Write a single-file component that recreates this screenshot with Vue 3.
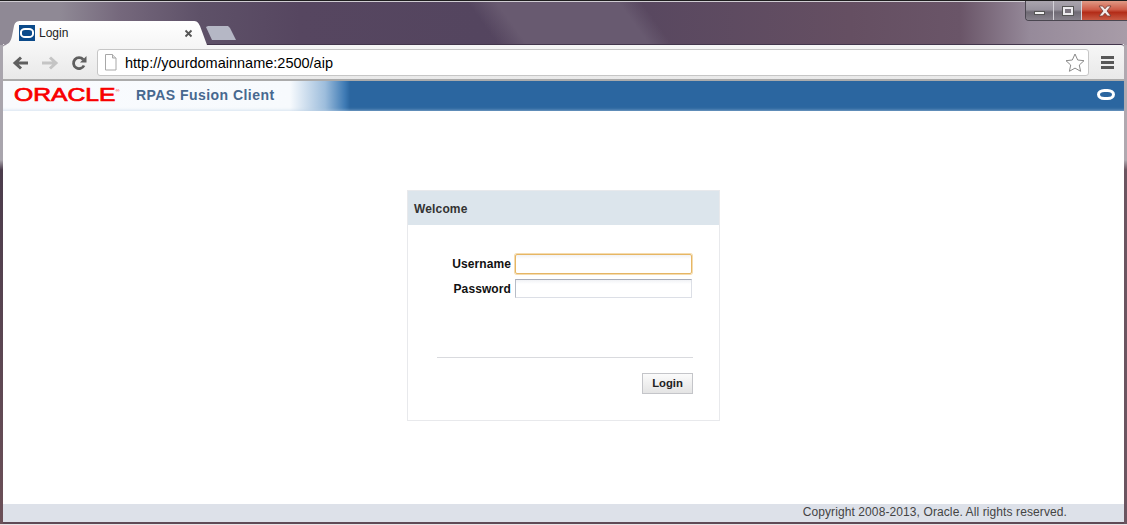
<script setup>
const fields = [
  { label: 'Username', cls: 'focus' },
  { label: 'Password', cls: '' }
]
</script>

<template>
  <div class="win">
    <div class="controls">
      <div class="ctl min"><i></i></div>
      <div class="ctl max"><i></i></div>
      <div class="ctl close">
        <svg width="14" height="12" viewBox="0 0 14 12"><path d="M1 1h3.600L7 3.800 9.400 1H13L9 6l4 5H9.400L7 8.200 4.600 11H1l4-5z" fill="#f4ecea" stroke="#6e3a34" stroke-width=".8"/></svg>
      </div>
    </div>
    <div class="tabstrip">
      <div class="tab">
        <span class="fav"><i></i></span>
        <span class="tabtitle">Login</span>
        <svg class="x" width="9" height="9" viewBox="0 0 9 9"><path d="M1.500 1.500l6 6M7.500 1.500l-6 6" stroke="#555" stroke-width="1.800"/></svg>
      </div>
      <div class="newtab"></div>
    </div>
    <div class="inner">
      <div class="toolbar">
        <svg class="nav" width="18" height="16" viewBox="0 0 18 16"><path d="M16 8H4M9 2.500 3 8l6 5.500" fill="none" stroke="#5f5f5f" stroke-width="3"/></svg>
        <svg class="nav fwd" width="18" height="16" viewBox="0 0 18 16"><path d="M1 8h12M9 2.500 15 8l-6 5.500" fill="none" stroke="#c4c4c4" stroke-width="3"/></svg>
        <svg class="nav reload" width="16" height="16" viewBox="0 0 16 16"><path d="M13 10.500A5.500 5.500 0 1 1 12.200 4.500" fill="none" stroke="#5f5f5f" stroke-width="2.800"/><path d="M15.500 1v6.500H9z" fill="#5f5f5f"/></svg>
        <div class="omni">
          <svg class="page" width="13" height="17" viewBox="0 0 13 17"><path d="M1.500.5h7l3.500 3.500v12h-10.500z" fill="#fff" stroke="#a8a8a8"/><path d="M8.500.5v3.500h3.500" fill="#e4e4e4" stroke="#a8a8a8"/></svg>
          <span class="url">http://yourdomainname:2500/aip</span>
          <svg class="star" width="20" height="19" viewBox="0 0 20 19"><path d="M10 1l2.700 6 6.300.7-4.700 4.300 1.300 6.300L10 15.100 4.400 18.300 5.700 12 1 7.700 7.300 7z" fill="#fff" stroke="#8a8a8a"/></svg>
        </div>
        <div class="menu"><i></i><i></i><i></i></div>
      </div>
      <header class="apphead">
        <div class="brand">
          <span class="oracle">ORACLE<sup>®</sup></span>
          <span class="product">RPAS Fusion Client</span>
        </div>
        <span class="ring"></span>
      </header>
      <main class="content">
        <section class="box">
          <h2 class="boxhead">Welcome</h2>
          <div class="boxbody">
            <div v-for="f in fields" :key="f.label" class="row">
              <label class="lbl">{{ f.label }}</label>
              <div class="field" :class="f.cls"></div>
            </div>
            <div class="actions">
              <button class="btn">Login</button>
            </div>
          </div>
        </section>
      </main>
      <footer class="foot">Copyright 2008-2013, Oracle. All rights reserved.</footer>
    </div>
  </div>
</template>

<style>
html, body { margin: 0; padding: 0; overflow: hidden; background: #fff; }
</style>

<style scoped>
.win {
  position: relative;
  width: 1127px;
  height: 525px;
  box-sizing: border-box;
  display: flex;
  flex-direction: column;
  padding: 1px 3px 3px 3px;
  overflow: hidden;
  font-family: "Liberation Sans", Arial, sans-serif;
  background-color: #5f4a56;
  background-image:
    linear-gradient(54deg, rgba(104,90,112,0) 43%, rgba(104,90,112,1) 45.500%, rgba(104,90,112,1) 56%, rgba(104,90,112,0) 58%),
    linear-gradient(90deg, #8f8995 0, #8f8995 60px, #75687c 120px, #5e5168 200px, #564660 300px, #54455f 480px, #594860 650px, #654f62 850px, #6a5568 960px, #968a9a 1030px, #a89ca8 1127px),
    linear-gradient(#a9a5ad 0, #a9a5ad 160px, #4b3c4c 170px, #6c5058 100%),
    linear-gradient(#b0a9b0 0, #b0a9b0 160px, #6b5560 170px, #6b5560 100%);
  background-size: 100% 45px, 100% 45px, 3px 100%, 3px 100%;
  background-position: 0 0, 0 0, 0 0, 100% 0;
  background-repeat: no-repeat;
  box-shadow: inset 0 1px 0 #1e1e1e, inset 0 2px 0 #cfccd2, inset 0 -1px 0 #e8e4e6;
}
.controls {
  position: absolute;
  top: 1px;
  right: 0;
  display: flex;
  height: 19px;
  border-left: 1px solid #4a4650;
  border-bottom: 1px solid #4a4650;
  border-radius: 0 0 0 4px;
  overflow: hidden;
  z-index: 2;
}
.ctl {
  height: 19px;
  display: flex;
  align-items: center;
  justify-content: center;
  box-sizing: border-box;
  border-right: 1px solid #d4d2d8;
  background: linear-gradient(#aaa5ae 0%, #98939e 45%, #6f6a74 58%, #87828c 100%);
}
.min { width: 28px; }
.min i { width: 9px; height: 2px; margin-top: 4px; background: #f2f2f2; border: 1px solid #555; }
.max { width: 28px; }
.max i { width: 6px; height: 4px; border: 2px solid #ecebee; outline: 1px solid #555; background: #7d7680; }
.close { width: 45px; border-right: 0; background: linear-gradient(#e09a86 0%, #cf5c48 45%, #b32c18 60%, #c85a44 100%); }
.tabstrip {
  height: 43px;
  flex: none;
  display: flex;
  align-items: flex-end;
  position: relative;
}
.tab {
  position: relative;
  z-index: 1;
  width: 205px;
  height: 24px;
  margin-bottom: -1px;
  box-sizing: border-box;
  padding: 0 15px 0 16px;
  display: flex;
  align-items: center;
  background: linear-gradient(#fff, #f6f6f6);
  clip-path: path("M0 24 C6 24 8 20 9 15 L11 5 C12 1 14 0 18 0 L190 0 C194 0 195 1 197 5 L204 24 Z");
}
.fav {
  width: 16px;
  height: 16px;
  background: #0b4a8a;
  display: flex;
  align-items: center;
  justify-content: center;
  flex: none;
}
.fav i { width: 10px; height: 6px; border: 2px solid #fff; border-radius: 5px / 4px; background: #0b4a8a; }
.tabtitle { margin-left: 4px; font-size: 12px; color: #222; flex: 1; }
.newtab {
  position: absolute;
  left: 203px;
  top: 25px;
  width: 30px;
  height: 14px;
  background: #b5b7c5;
  clip-path: polygon(0 1px, 2px 0, 22px 0, 24px 2px, 30px 14px, 6px 14px);
}
.inner {
  flex: 1;
  min-height: 0;
  display: flex;
  flex-direction: column;
  background: #fff;
}
.toolbar {
  height: 37px;
  flex: none;
  box-sizing: border-box;
  display: flex;
  align-items: center;
  background: linear-gradient(#f6f6f6, #e9e9e9);
  border-top: 1px solid #43364c;
  border-bottom: 2px solid #ababab;
  border-radius: 3px 3px 0 0;
  padding: 1px 10px 0 9px;
}
.nav { flex: none; }
.fwd { margin-left: 11px; }
.reload { margin-left: 12px; }
.omni {
  margin-left: 10px;
  flex: 1;
  height: 27px;
  box-sizing: border-box;
  display: flex;
  align-items: center;
  background: #fff;
  border: 1px solid #c6c6c6;
  border-radius: 3px;
  padding: 0 3px 0 6px;
}
.url { margin-left: 8px; font-size: 14.500px; color: #000; flex: 1; }
.menu {
  margin-left: 12px;
  width: 13px;
  display: flex;
  flex-direction: column;
  gap: 2px;
}
.menu i { height: 3px; background: #585858; display: block; }
.apphead {
  height: 30px;
  flex: none;
  box-sizing: border-box;
  display: flex;
  align-items: center;
  justify-content: space-between;
  background: linear-gradient(90deg, #f9fbfe 0, #f7fafd 287px, #9dbddc 322px, #3e7ab4 342px, #2b66a0 347px, #2b66a0 100%);
  box-shadow: inset 0 -3px 3px -2px rgba(190,210,230,.55);
  padding: 0 9px 3px 11px;
}
.brand { display: flex; align-items: center; }
.oracle {
  display: block;
  width: 122px;
  font-size: 18px;
  line-height: 20px;
  color: #f80000;
  -webkit-text-stroke: .7px #f80000;
  transform: scaleX(1.37);
  transform-origin: left center;
}
.oracle sup { font-size: 4px; -webkit-text-stroke: 0; vertical-align: 9px; line-height: 0; }
.product {
  font-size: 14px;
  font-weight: bold;
  letter-spacing: .45px;
  color: #47688f;
}
.ring {
  width: 12px;
  height: 5px;
  border: 3px solid #fff;
  border-radius: 8px / 6px;
  margin-bottom: 1px;
}
.content {
  flex: 1;
  min-height: 0;
  padding-top: 79px;
  display: flex;
  justify-content: center;
}
.box {
  width: 313px;
  height: 231px;
  box-sizing: border-box;
  border: 1px solid #e8e9ec;
}
.boxhead {
  margin: 0;
  height: 34px;
  padding-left: 6px;
  line-height: 36px;
  font-size: 12px;
  font-weight: bold;
  letter-spacing: .15px;
  color: #333;
  background: #dce5ec;
}
.boxbody {
  padding: 29px 26px 0 29px;
}
.row {
  display: flex;
  align-items: center;
  margin-bottom: 5px;
}
.lbl {
  width: 74px;
  text-align: right;
  margin-right: 4px;
  font-size: 12px;
  font-weight: bold;
  letter-spacing: .1px;
  color: #111;
}
.field {
  width: 177px;
  height: 19px;
  box-sizing: border-box;
  border: 1px solid #dcdfe6;
  border-top-color: #a9adb8;
  border-left-color: #b8bcc6;
  background: linear-gradient(#f1f2f5 0, #fff 4px);
}
.focus {
  width: 177px;
  height: 20px;
  border: 1px solid #e6b664;
  border-radius: 2px;
  box-shadow: 0 0 0 1px rgba(238,196,124,.6);
}
.actions {
  margin-top: 59px;
  border-top: 1px solid #d9dade;
  padding-top: 15px;
  display: flex;
  justify-content: flex-end;
}
.btn {
  width: 51px;
  height: 21px;
  padding: 0 0 2px;
  font: bold 11.300px "Liberation Sans", sans-serif;
  color: #222;
  background: linear-gradient(#fbfbfb, #e4e4e4);
  border: 1px solid #c4c5c9;
  border-radius: 0;
}
.foot {
  height: 18px;
  flex: none;
  box-sizing: border-box;
  background: #dde1e9;
  color: #444;
  font-size: 12px;
  letter-spacing: .1px;
  line-height: 16px;
  text-align: right;
  padding-right: 57px;
}
</style>
